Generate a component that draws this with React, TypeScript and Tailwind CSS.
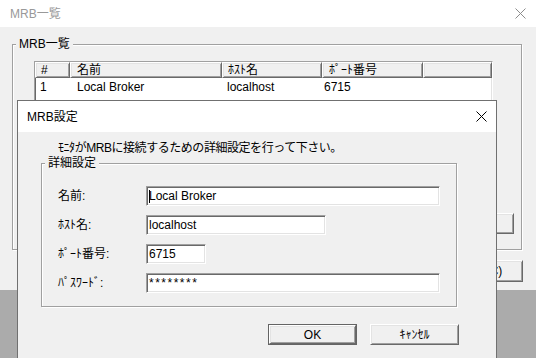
const font = "font-['Liberation_Sans','Noto_Sans_CJK_JP',sans-serif]";

const raised =
  "border border-t-white border-l-white border-r-[#696969] border-b-[#696969] shadow-[inset_1px_1px_0_#e3e3e3,inset_-1px_-1px_0_#a0a0a0] bg-[#f0f0f0]";
const sunken =
  "border border-t-[#a0a0a0] border-l-[#a0a0a0] border-r-white border-b-white shadow-[inset_1px_1px_0_#696969,inset_-1px_-1px_0_#e3e3e3] bg-white";
const groupBox = "relative border border-[#a0a0a0] shadow-[inset_1px_1px_0_#fff,1px_1px_0_#fff]";

function CloseIcon({ color }: { color: string }) {
  return (
    <svg width="11" height="11" viewBox="0 0 11 11" fill="none">
      <path d="M0.5 0.5 L10.5 10.5 M10.5 0.5 L0.5 10.5" stroke={color} strokeWidth="1" />
    </svg>
  );
}

function GroupLabel({ children }: { children: string }) {
  return (
    <span className="absolute -top-[8px] left-[3px] px-[3px] bg-[#f0f0f0] text-[12px] leading-[14px] text-black">
      {children}
    </span>
  );
}

const headers = [
  { label: "#", w: "w-[35px]", pl: "pl-[5px]" },
  { label: "名前", w: "w-[152px]", pl: "pl-[6px]" },
  { label: "ﾎｽﾄ名", w: "w-[100px]", pl: "pl-[5px]" },
  { label: "ﾎﾟｰﾄ番号", w: "w-[101px]", pl: "pl-[6px]" },
];

function Field({
  label,
  value,
  w,
  caret,
  valueClass = "",
}: {
  label: string;
  value: string;
  w: string;
  caret?: boolean;
  valueClass?: string;
}) {
  return (
    <div className="flex items-center h-[20px]">
      <span className="w-[104px] pl-[16px] text-[12px] leading-[14px] whitespace-nowrap">{label}</span>
      <div className={`${sunken} ${w} h-[20px] flex items-center pl-[2px] text-[12px] leading-[14px] text-black`}>
        {caret && <span className="inline-block w-px h-[13px] bg-black -mr-px" />}
        <span className={valueClass}>{value}</span>
      </div>
    </div>
  );
}

export default function App() {
  return (
    <div className={`${font} relative w-[536px] h-[358px] overflow-hidden bg-[#ababab] text-black`}>
      {/* main window */}
      <div className="flex flex-col">
        <div className="h-[27px] bg-white flex items-center justify-between pl-[10px] pr-[10px]">
          <span className="text-[12px] text-[#999999]">MRB一覧</span>
          <CloseIcon color="#8c8c8c" />
        </div>
        <div className="h-[263px] bg-[#f0f0f0] pt-[17px] flex flex-col">
          <div className={`${groupBox} ml-[12px] w-[510px] h-[206px]`}>
            <GroupLabel>MRB一覧</GroupLabel>
            <div className={`ml-[21px] mt-[16px] w-[459px] h-[140px] ${sunken}`}>
              <div className="flex h-[16px] text-[12px] leading-[14px]">
                {headers.map((h) => (
                  <div key={h.label} className={`${h.w} ${h.pl} ${raised} flex items-center whitespace-nowrap`}>
                    {h.label}
                  </div>
                ))}
                <div className={`flex-1 ${raised}`} />
              </div>
              <div className="flex h-[17px] items-center text-[12px] leading-[14px]">
                <span className="w-[35px] pl-[5px]">1</span>
                <span className="w-[152px] pl-[7px]">Local Broker</span>
                <span className="w-[100px] pl-[5px]">localhost</span>
                <span className="w-[101px] pl-[2px]">6715</span>
              </div>
            </div>
            <div className="flex justify-end pr-[7px] mt-[12px]">
              <button className={`${raised} w-[88px] h-[21px] text-[12px] whitespace-nowrap`}>編集(E)</button>
            </div>
          </div>
          <div className="flex justify-end pr-[13px] mt-[10px]">
            <button className={`${raised} w-[88px] h-[22px] text-[12px] whitespace-nowrap pr-[6px]`}>閉じる(C)</button>
          </div>
        </div>
      </div>

      {/* settings dialog */}
      <div className="absolute left-[17px] top-[100px] w-[480px] h-[280px] border border-[#707070] flex flex-col">
        <div className="h-[31px] bg-white flex items-center justify-between pl-[9px] pr-[9px]">
          <span className="text-[12px]">MRB設定</span>
          <CloseIcon color="#000000" />
        </div>
        <div className="flex-1 bg-[#f0f0f0] flex flex-col">
          <p className="pl-[40px] pt-[9px] text-[12px] leading-[14px] tracking-[-0.45px] whitespace-nowrap">
            ﾓﾆﾀがMRBに接続するための詳細設定を行って下さい。
          </p>
          <div className={`${groupBox} mt-[8px] ml-[23px] w-[416px] h-[144px]`}>
            <GroupLabel>詳細設定</GroupLabel>
            <div className="flex flex-col gap-[9px] pt-[22px]">
              <Field label="名前:" value="Local Broker" w="w-[294px]" caret />
              <Field label="ﾎｽﾄ名:" value="localhost" w="w-[180px]" />
              <Field label="ﾎﾟｰﾄ番号:" value="6715" w="w-[60px]" />
              <Field label="ﾊﾟｽﾜｰﾄﾞ:" value="********" w="w-[294px]" valueClass="tracking-[1.5px]" />
            </div>
          </div>
          <div className="flex pl-[250px] gap-[13px] mt-[17px]">
            <button className="w-[89px] h-[21px] border border-[#646464] p-0 flex">
              <span className={`${raised} flex-1 flex items-center justify-center text-[12px]`}>OK</span>
            </button>
            <button className={`${raised} w-[89px] h-[21px] text-[12px]`}>ｷｬﾝｾﾙ</button>
          </div>
        </div>
      </div>
    </div>
  );
}
